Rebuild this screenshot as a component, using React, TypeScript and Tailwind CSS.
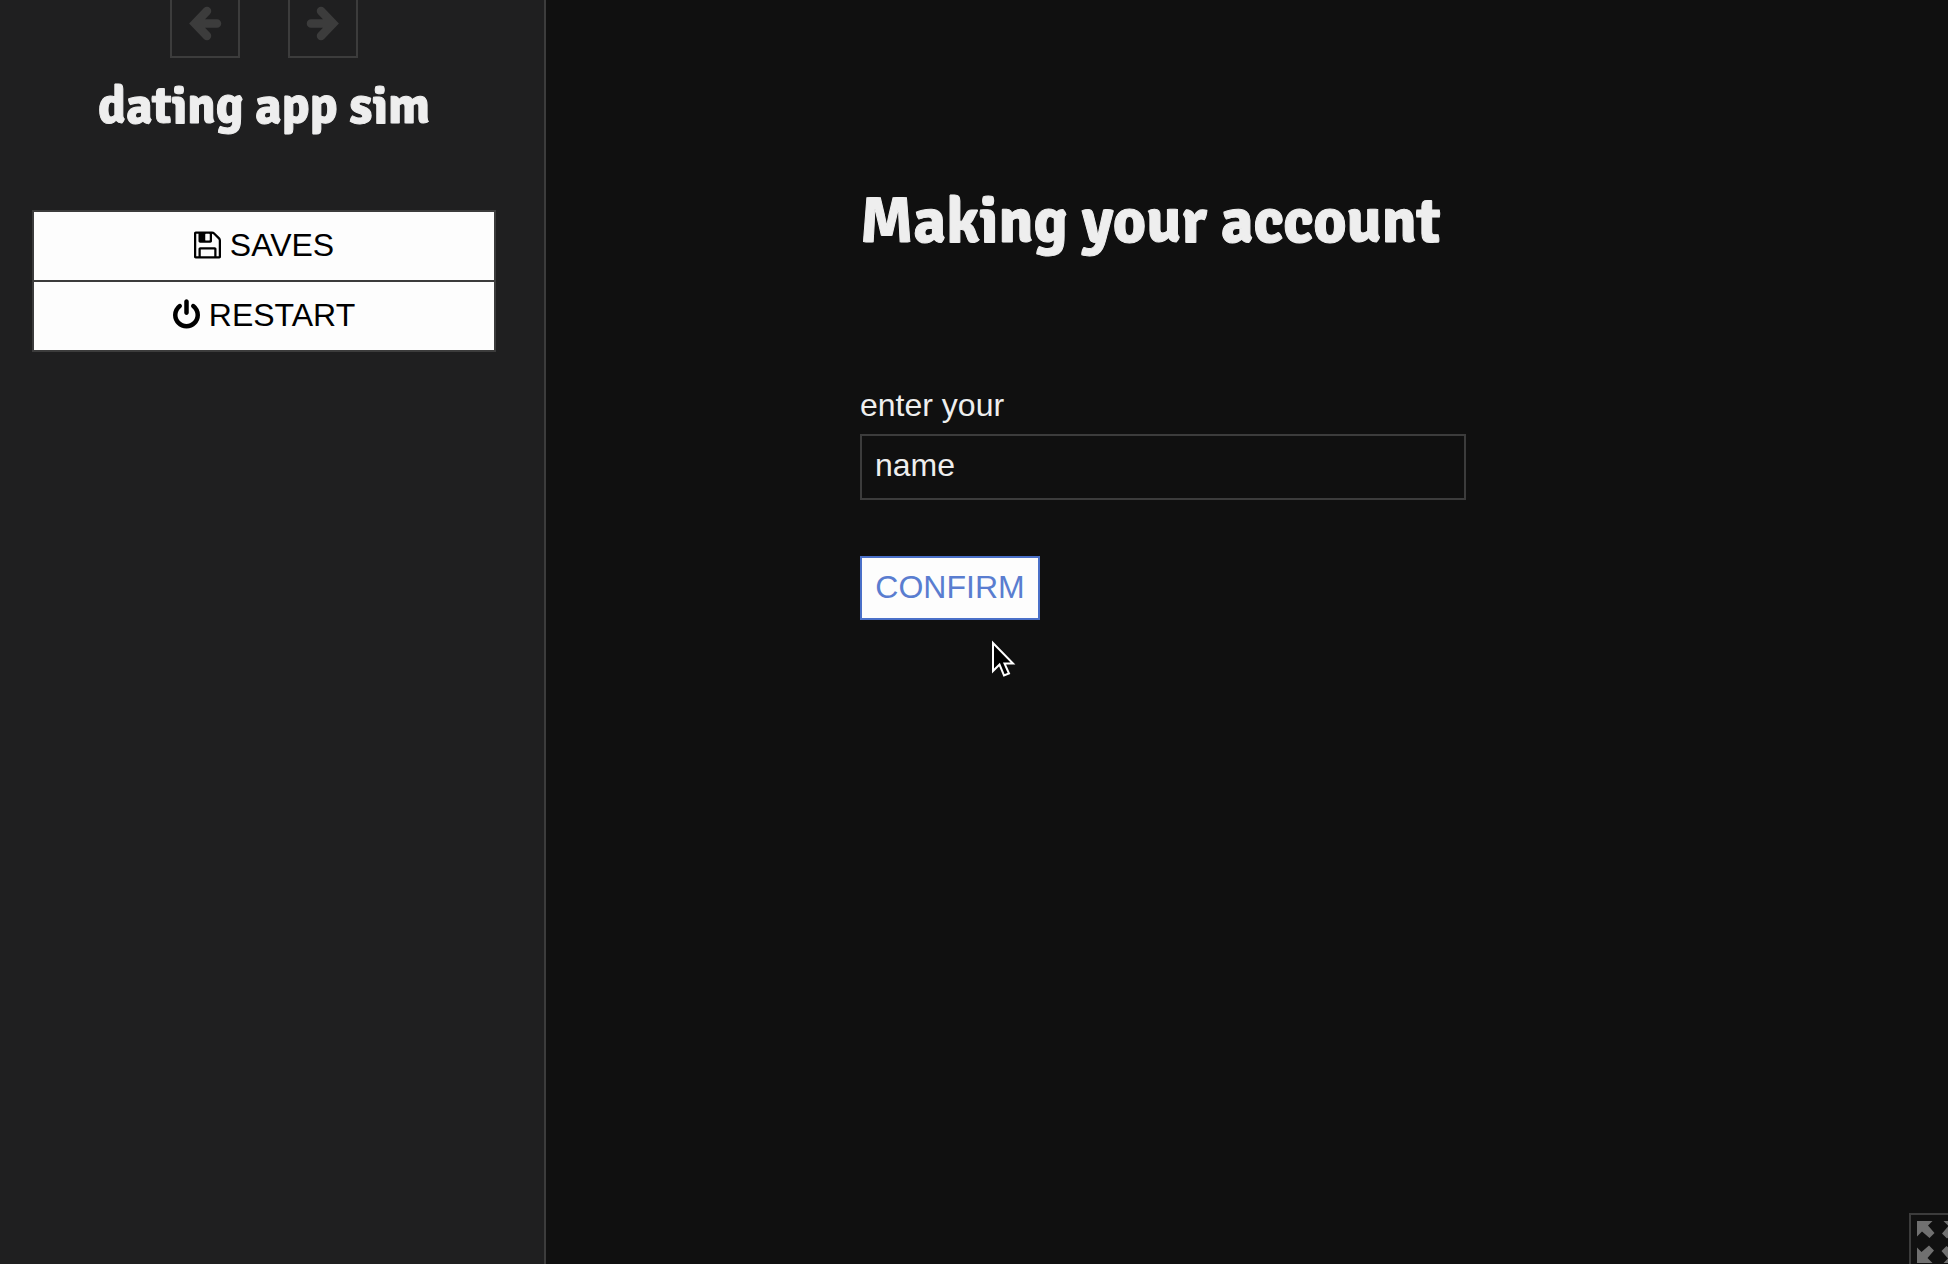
import type { ReactNode } from "react";

function ArrowIcon({ flip = false }: { flip?: boolean }) {
  return (
    <svg width="34" height="36" viewBox="0 0 34 36" aria-hidden="true" className={flip ? "-scale-x-100" : ""}>
      <path
        d="M19 6 7 18.500l12 12.500M8 18.500h21"
        fill="none"
        stroke="currentColor"
        strokeWidth="8.500"
        strokeLinecap="round"
        strokeLinejoin="miter"
      />
    </svg>
  );
}

function SaveIcon() {
  return (
    <svg width="27" height="32" viewBox="128 0 1536 1792" fill="currentColor" aria-hidden="true">
      <path d="M512 1536h768v-384h-768v384zm896 0h128v-896q0-14-10-38.500t-20-34.500l-281-281q-10-10-34-20t-39-10v416q0 40-28 68t-68 28h-576q-40 0-68-28t-28-68v-416h-128v1280h128v-416q0-40 28-68t68-28h832q40 0 68 28t28 68v416zm-384-928v-320q0-13-9.500-22.500t-22.500-9.500h-192q-13 0-22.500 9.500t-9.500 22.500v320q0 13 9.500 22.500t22.500 9.500h192q13 0 22.500-9.500t9.500-22.500zm640 32v928q0 40-28 68t-68 28h-1344q-40 0-68-28t-28-68v-1344q0-40 28-68t68-28h928q40 0 88 20t76 48l280 280q28 28 48 76t20 88z" />
    </svg>
  );
}

function PowerIcon() {
  return (
    <svg width="27" height="32" viewBox="128 0 1536 1792" fill="currentColor" aria-hidden="true">
      <path d="M1664 896q0 156-61 298t-164 245-245 164-298 61-298-61-245-164-164-245-61-298q0-182 80.500-343t226.500-270q43-32 95.500-25t83.500 50q32 42 24.500 94.500t-49.500 84.500q-98 74-151.500 181t-53.500 228q0 104 40.500 198.500t109.500 163.500 163.500 109.500 198.500 40.500 198.500-40.500 163.500-109.500 109.500-163.500 40.500-198.500q0-121-53.500-228t-151.500-181q-42-32-49.500-84.500t24.500-94.500q31-43 84-50t95 25q146 109 226.500 270t80.500 343zm-640-768v640q0 52-38 90t-90 38-90-38-38-90v-640q0-52 38-90t90-38 90 38 38 90z" />
    </svg>
  );
}

const corner = "M0 0h15.500l-4.500 4.500 6.500 7.500-5 5-7.500-6.500L0 15.500z";

function ExpandIcon() {
  return (
    <svg width="42" height="42" viewBox="0 0 42 42" fill="currentColor" aria-hidden="true">
      <path d={corner} />
      <path d={corner} transform="rotate(90 21 21)" />
      <path d={corner} transform="rotate(180 21 21)" />
      <path d={corner} transform="rotate(270 21 21)" />
    </svg>
  );
}

function MenuButton({ icon, children }: { icon: ReactNode; children: ReactNode }) {
  return (
    <button
      type="button"
      className="flex h-[68px] w-full cursor-pointer items-center justify-center gap-[9px] bg-[#fdfdfd] pb-0.5 text-black"
    >
      {icon}
      <span>{children}</span>
    </button>
  );
}

function Pointer() {
  return (
    <svg
      width="26"
      height="40"
      viewBox="0 0 26 40"
      aria-hidden="true"
      className="pointer-events-none absolute top-[84px] left-[131px]"
    >
      <path d="M2 3v28l6.500-6.500 4.500 11 5-2-4.500-10H22z" fill="#000" stroke="#fff" strokeWidth="2" />
    </svg>
  );
}

export default function App() {
  return (
    <div className="flex min-h-screen overflow-hidden bg-[#101010] font-['Liberation_Sans',Arial,sans-serif] text-[32px] leading-[48px] text-[#eee]">
      <aside className="w-[546px] shrink-0 border-r-2 border-[#3c3c3c] bg-[#1f1f20] pr-12 pl-8">
        <nav aria-label="History" className="flex justify-center gap-12">
          <button
            type="button"
            aria-label="Back"
            className="flex h-[58px] w-[70px] justify-center border-2 border-t-0 border-[#3c3c3c] pt-[5px] text-[#3c3c3c]"
          >
            <ArrowIcon />
          </button>
          <button
            type="button"
            aria-label="Forward"
            className="flex h-[58px] w-[70px] justify-center border-2 border-t-0 border-[#3c3c3c] pt-[5px] text-[#3c3c3c]"
          >
            <ArrowIcon flip />
          </button>
        </nav>
        <h1 className="mt-4 text-center font-['Signika','Fira_Sans_Condensed','Open_Sans',sans-serif] text-[52px] leading-[64px] font-bold [-webkit-text-stroke:1px_#eee]">
          dating app sim
        </h1>
        <ul className="mt-[72px] divide-y-2 divide-[#3c3c3c] border-2 border-[#3c3c3c]">
          <li>
            <MenuButton icon={<SaveIcon />}>SAVES</MenuButton>
          </li>
          <li>
            <MenuButton icon={<PowerIcon />}>RESTART</MenuButton>
          </li>
        </ul>
      </aside>

      <main className="relative flex flex-1 justify-center pt-[182px] pr-[200px] pl-8">
        <form className="w-[606px]" onSubmit={(e) => e.preventDefault()}>
          <h2 className="font-['Signika','Fira_Sans_Condensed','Open_Sans',sans-serif] text-[64px] leading-[80px] font-bold whitespace-nowrap [-webkit-text-stroke:1px_#eee]">
            Making your account
          </h2>
          <label htmlFor="name" className="mt-[119px] block">
            enter your
          </label>
          <input
            id="name"
            type="text"
            defaultValue="name"
            className="mt-[5px] block h-[66px] w-full border-2 border-[#3c3c3c] bg-transparent px-[13px] pb-1 outline-none"
          />
          <div className="relative mt-14">
            <button
              type="submit"
              className="flex h-16 w-[180px] cursor-pointer items-center justify-center border-2 border-[#4a70c8] bg-[#fdfdfd] pb-0.5 text-[#5a7dd0]"
            >
              CONFIRM
            </button>
            <Pointer />
          </div>
        </form>
        <button
          type="button"
          aria-label="Toggle full screen"
          className="absolute -right-[19px] -bottom-[7px] border-2 border-[#3c3c3c] bg-[#101010] p-[6px] text-[#707070]"
        >
          <ExpandIcon />
        </button>
      </main>
    </div>
  );
}
